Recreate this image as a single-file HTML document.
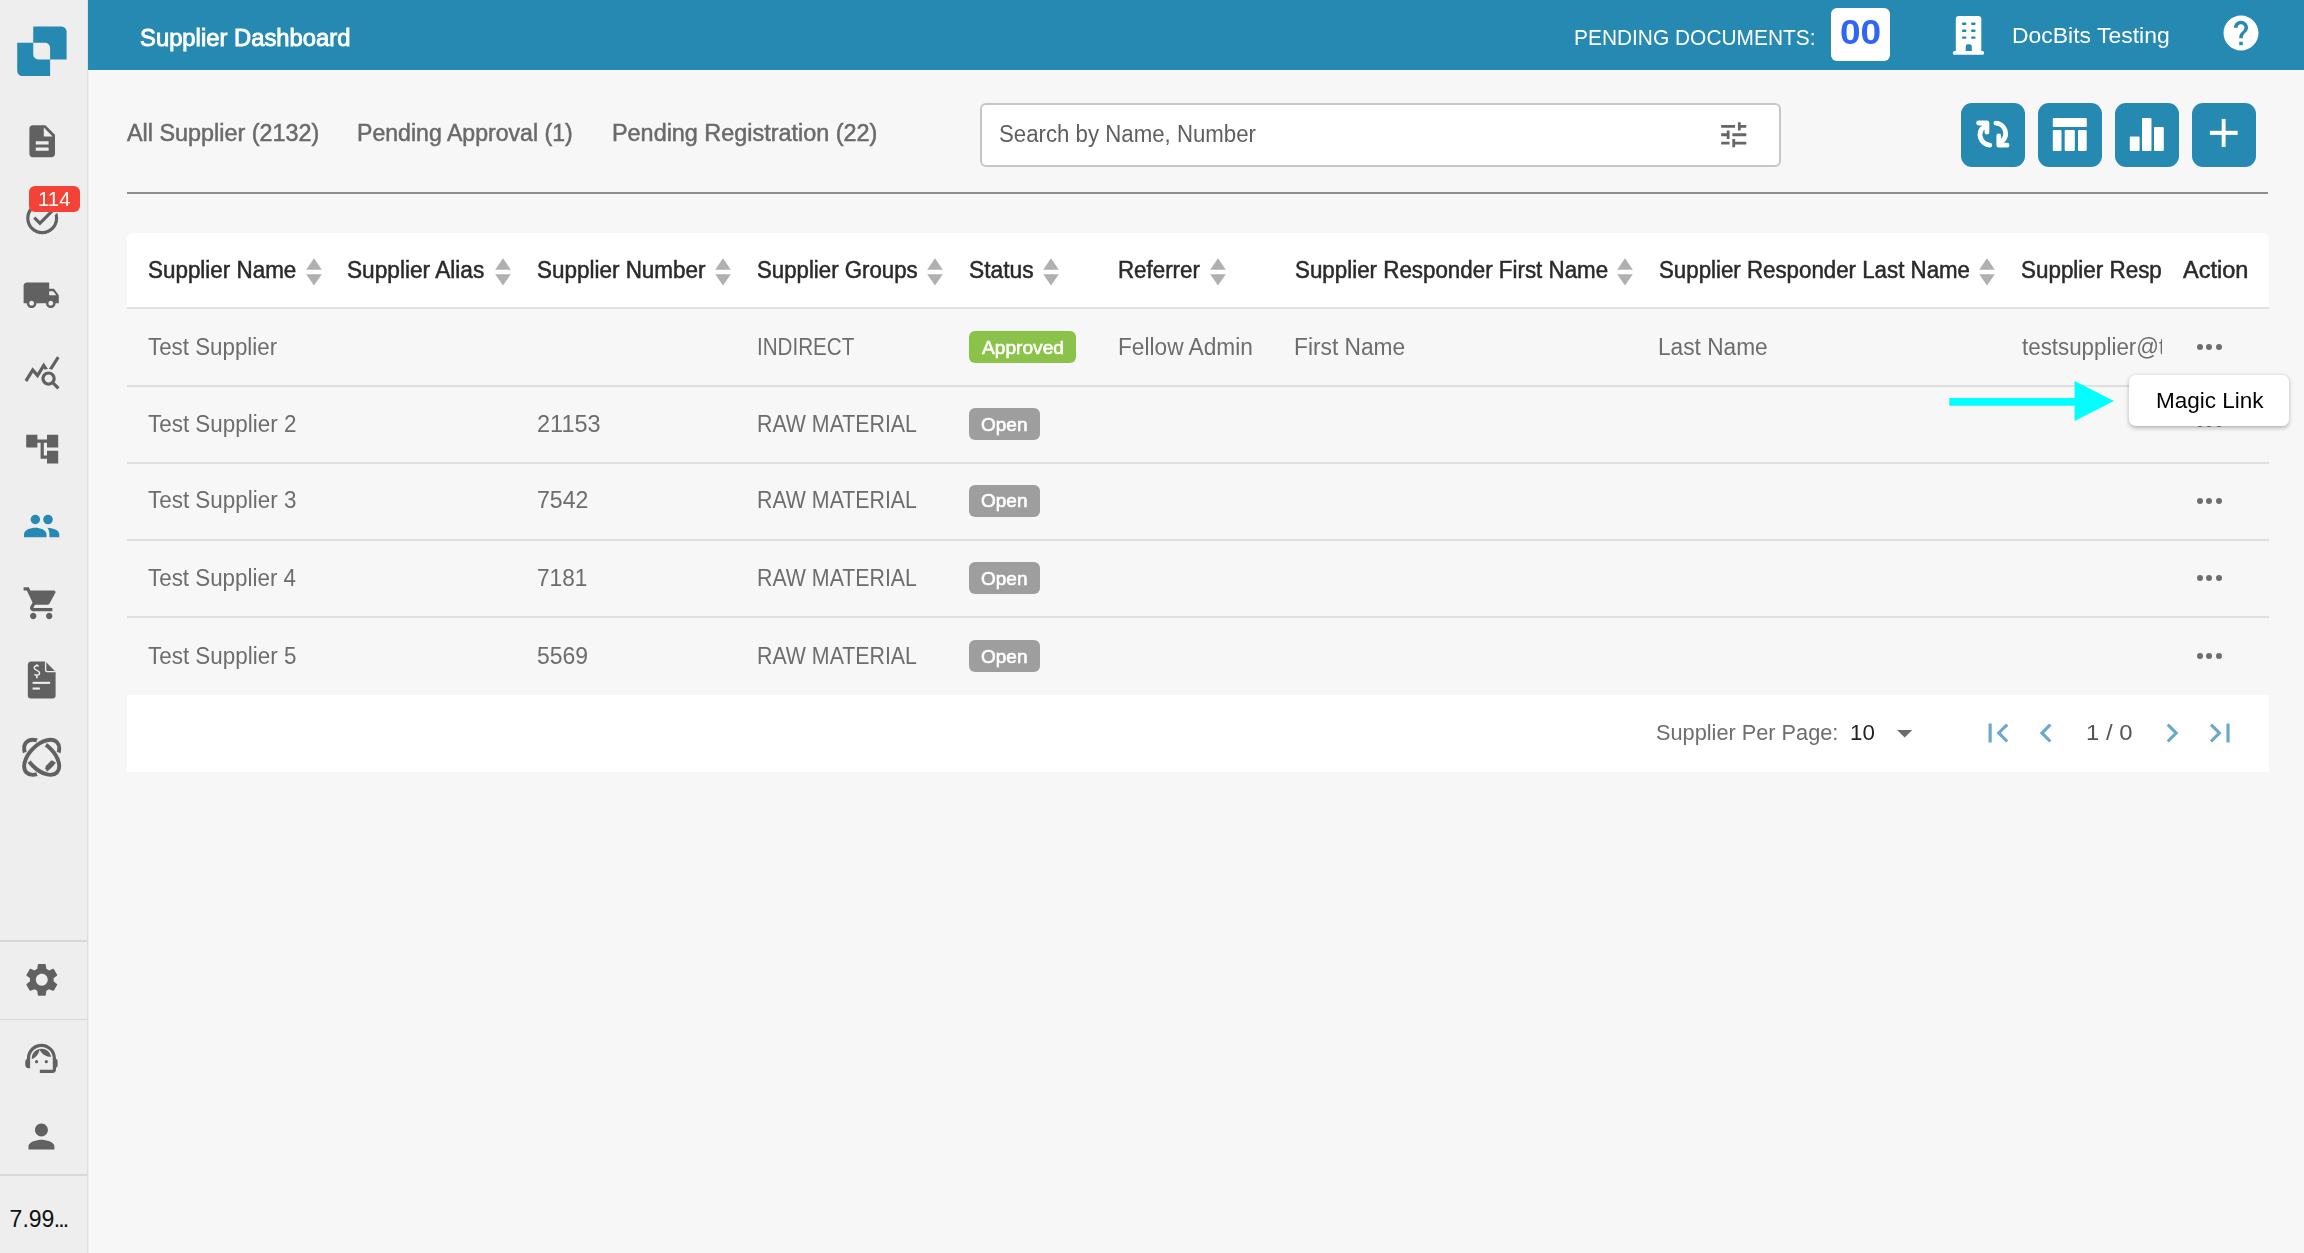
<!DOCTYPE html>
<html><head><meta charset="utf-8"><style>
html,body{margin:0;padding:0}
body{width:2304px;height:1253px;overflow:hidden;background:#f7f7f7;font-family:"Liberation Sans",sans-serif;position:relative}
.t{position:absolute;white-space:nowrap;transform-origin:0 0}
.ic{position:absolute;overflow:visible}
.abs{position:absolute}
</style></head><body>
<!-- sidebar -->
<div class="abs" style="left:0;top:0;width:87px;height:1253px;background:#eeeeee"></div>
<div class="abs" style="left:87px;top:0;width:1px;height:1253px;background:#dedede"></div><div class="abs" style="left:88px;top:0;width:1px;height:1253px;background:#f1f1f1"></div>
<div class="abs" style="left:0;top:940.3px;width:87px;height:1.6px;background:#d8d8d8"></div>
<div class="abs" style="left:0;top:1018.8px;width:87px;height:1.6px;background:#d8d8d8"></div>
<div class="abs" style="left:0;top:1174.3px;width:87px;height:1.6px;background:#d8d8d8"></div>
<svg class="ic" style="left:0;top:0;width:88px;height:90px" viewBox="0 0 88 90">
 <path fill="#2589b1" d="M33.25 26.4H61.4A5.2 5.2 0 0 1 66.6 31.6V59.6H33.25z"/>
 <path fill="#2589b1" d="M17.2 42.75H50.1V75.9H22.4A5.2 5.2 0 0 1 17.2 70.7z"/>
 <path fill="#eeeeee" d="M33.25 42.75H45A5.1 5.1 0 0 1 50.1 47.85V59.6H38.35A5.1 5.1 0 0 1 33.25 54.5z"/>
</svg>
<!-- header -->
<div class="abs" style="left:88px;top:0;width:2216px;height:70.4px;background:#2589b1"></div>
<div class="abs" style="left:1831px;top:8px;width:59px;height:52.5px;border-radius:6px;background:#ffffff"></div>
<svg class="ic" style="left:1950px;top:14px;width:38px;height:44px" viewBox="0 0 38 44">
 <path fill="#fff" d="M8.8 1.95H28.3A3 3 0 0 1 31.3 4.95V37H32.3A1.9 1.9 0 0 1 32.3 40.8H4.7A1.9 1.9 0 0 1 4.7 37H5.8V4.95A3 3 0 0 1 8.8 1.95z"/>
 <g fill="#2589b1"><rect x="11.9" y="8.6" width="4.6" height="2.4" rx="1.2"/><rect x="21" y="8.6" width="4.6" height="2.4" rx="1.2"/>
 <rect x="11.9" y="15.6" width="4.6" height="2.4" rx="1.2"/><rect x="21" y="15.6" width="4.6" height="2.4" rx="1.2"/>
 <rect x="11.9" y="22.4" width="4.6" height="2.4" rx="1.2"/><rect x="21" y="22.4" width="4.6" height="2.4" rx="1.2"/>
 <path d="M15.7 37V32.5A2.2 2.2 0 0 1 17.9 30.3H19.6A2.2 2.2 0 0 1 21.8 32.5V37z"/></g>
</svg>
<svg class="ic" style="left:2220.10px;top:11.50px;width:42.00px;height:42.00px" viewBox="0 0 24 24"><path fill="#ffffff" d="M12 2C6.48 2 2 6.48 2 12s4.48 10 10 10 10-4.48 10-10S17.52 2 12 2zm1 17h-2v-2h2v2zm2.07-7.75l-.9.92C13.45 12.9 13 13.5 13 15h-2v-.5c0-1.1.45-2.1 1.17-2.83l1.24-1.26c.37-.36.59-.86.59-1.41 0-1.1-.9-2-2-2s-2 .9-2 2H8c0-2.21 1.79-4 4-4s4 1.79 4 4c0 .88-.36 1.68-.93 2.25z"/></svg>
<!-- search -->
<div class="abs" style="box-sizing:border-box;left:980px;top:103px;width:801px;height:63.5px;border:2px solid #c6c6c6;border-radius:6px;background:#ffffff"></div>
<div class="abs" style="left:127px;top:192px;width:2141px;height:2px;background:#8e8e8e"></div>
<!-- buttons -->
<div class="abs" style="left:1961px;top:103px;width:64px;height:64px;border-radius:11px;background:#2589b1"></div>
<div class="abs" style="left:2038px;top:103px;width:64px;height:64px;border-radius:11px;background:#2589b1"></div>
<div class="abs" style="left:2115px;top:103px;width:64px;height:64px;border-radius:11px;background:#2589b1"></div>
<div class="abs" style="left:2192px;top:103px;width:64px;height:64px;border-radius:11px;background:#2589b1"></div>
<svg class="ic" style="left:1961px;top:103px;width:64px;height:64px" viewBox="1961 103 64 64">
 <g id="rfl" fill="none" stroke="#fff" stroke-width="4.8" stroke-linecap="round" stroke-linejoin="round">
  <path d="M1989.8 145.1A10.3 10.3 0 0 1 1984.2 126.6"/>
  <path d="M1978.6 123H1986.9V132.2"/>
 </g>
 <use href="#rfl" transform="rotate(180 1992.85 134.1)"/>
</svg>
<svg class="ic" style="left:2038px;top:103px;width:64px;height:64px" viewBox="0 0 64 64">
 <g fill="#fff"><rect x="14.8" y="15" width="34" height="9" rx="1"/><rect x="14.8" y="27" width="8.7" height="21" rx="1"/><rect x="26.7" y="27" width="10.1" height="21" rx="1"/><rect x="40" y="27" width="8.7" height="21" rx="1"/></g>
</svg>
<svg class="ic" style="left:2115px;top:103px;width:64px;height:64px" viewBox="0 0 64 64">
 <g fill="#fff"><rect x="14.8" y="33.6" width="9.8" height="14.3" rx="1"/><rect x="27" y="15" width="9.5" height="32.9" rx="1"/><rect x="39" y="24.1" width="9.8" height="23.8" rx="1"/></g>
</svg>
<svg class="ic" style="left:2192px;top:103px;width:64px;height:64px" viewBox="0 0 64 64">
 <g fill="#fff"><rect x="17.9" y="27.8" width="27.8" height="4.1"/><rect x="29.7" y="15.9" width="3.9" height="28"/></g>
</svg>
<!-- table -->
<div class="abs" style="left:127px;top:233px;width:2141.5px;height:75px;background:#ffffff;border-radius:6px 6px 0 0"></div>
<div class="abs" style="left:127px;top:307.4px;width:2141.5px;height:2px;background:#e0e0e0"></div>
<div class="abs" style="left:127px;top:384.8px;width:2141.5px;height:2px;background:#dfdfdf"></div>
<div class="abs" style="left:127px;top:462.1px;width:2141.5px;height:2px;background:#dfdfdf"></div>
<div class="abs" style="left:127px;top:538.9px;width:2141.5px;height:2px;background:#dfdfdf"></div>
<div class="abs" style="left:127px;top:615.9px;width:2141.5px;height:2px;background:#dfdfdf"></div>
<div class="abs" style="left:127px;top:694.6px;width:2141.5px;height:77px;background:#ffffff"></div>
<!-- badges -->
<div class="abs" style="left:969.2px;top:331.2px;width:107.2px;height:31.9px;border-radius:6px;background:#8bc34a"></div>
<div class="abs" style="left:969.3px;top:408.2px;width:70.5px;height:31.6px;border-radius:6px;background:#9e9e9e"></div>
<div class="abs" style="left:969.3px;top:485.2px;width:70.5px;height:31.6px;border-radius:6px;background:#9e9e9e"></div>
<div class="abs" style="left:969.3px;top:562.4px;width:70.5px;height:31.6px;border-radius:6px;background:#9e9e9e"></div>
<div class="abs" style="left:969.3px;top:640px;width:70.5px;height:31.6px;border-radius:6px;background:#9e9e9e"></div>
<!-- email clipped -->
<div class="abs" style="left:2010px;top:320px;width:151.5px;height:50px;overflow:hidden"><div class="t" style="left:12.10px;top:15.75px;font-size:23px;line-height:23px;color:#6d6d6d;transform:scaleX(0.9714)">testsupplier@test.com</div></div>
<div class="abs" style="left:2010px;top:245px;width:152px;height:50px;overflow:hidden"><div class="t" style="left:11.10px;top:13.75px;font-size:23px;line-height:23px;color:#2a2a2a;transform:scaleX(0.9749);-webkit-text-stroke:0.5px #2a2a2a">Supplier Responder Email</div></div>
<div class="abs" style="left:2196.85px;top:344.30px;width:6px;height:6px;border-radius:50%;background:#6e6e6e"></div><div class="abs" style="left:2206.40px;top:344.30px;width:6px;height:6px;border-radius:50%;background:#6e6e6e"></div><div class="abs" style="left:2216.00px;top:344.30px;width:6px;height:6px;border-radius:50%;background:#6e6e6e"></div><div class="abs" style="left:2196.85px;top:421.20px;width:6px;height:6px;border-radius:50%;background:#6e6e6e"></div><div class="abs" style="left:2206.40px;top:421.20px;width:6px;height:6px;border-radius:50%;background:#6e6e6e"></div><div class="abs" style="left:2216.00px;top:421.20px;width:6px;height:6px;border-radius:50%;background:#6e6e6e"></div><div class="abs" style="left:2196.85px;top:498.20px;width:6px;height:6px;border-radius:50%;background:#6e6e6e"></div><div class="abs" style="left:2206.40px;top:498.20px;width:6px;height:6px;border-radius:50%;background:#6e6e6e"></div><div class="abs" style="left:2216.00px;top:498.20px;width:6px;height:6px;border-radius:50%;background:#6e6e6e"></div><div class="abs" style="left:2196.85px;top:575.30px;width:6px;height:6px;border-radius:50%;background:#6e6e6e"></div><div class="abs" style="left:2206.40px;top:575.30px;width:6px;height:6px;border-radius:50%;background:#6e6e6e"></div><div class="abs" style="left:2216.00px;top:575.30px;width:6px;height:6px;border-radius:50%;background:#6e6e6e"></div><div class="abs" style="left:2196.85px;top:652.60px;width:6px;height:6px;border-radius:50%;background:#6e6e6e"></div><div class="abs" style="left:2206.40px;top:652.60px;width:6px;height:6px;border-radius:50%;background:#6e6e6e"></div><div class="abs" style="left:2216.00px;top:652.60px;width:6px;height:6px;border-radius:50%;background:#6e6e6e"></div>
<svg class="ic" style="left:305.60px;top:258px;width:16px;height:28px" viewBox="0 0 16 28"><path fill="#b0b0b0" d="M8 0.2L15.8 11.7H0.2z M0.2 16.2H15.8L8 27.4z"/></svg><svg class="ic" style="left:494.60px;top:258px;width:16px;height:28px" viewBox="0 0 16 28"><path fill="#b0b0b0" d="M8 0.2L15.8 11.7H0.2z M0.2 16.2H15.8L8 27.4z"/></svg><svg class="ic" style="left:715.30px;top:258px;width:16px;height:28px" viewBox="0 0 16 28"><path fill="#b0b0b0" d="M8 0.2L15.8 11.7H0.2z M0.2 16.2H15.8L8 27.4z"/></svg><svg class="ic" style="left:926.60px;top:258px;width:16px;height:28px" viewBox="0 0 16 28"><path fill="#b0b0b0" d="M8 0.2L15.8 11.7H0.2z M0.2 16.2H15.8L8 27.4z"/></svg><svg class="ic" style="left:1043.40px;top:258px;width:16px;height:28px" viewBox="0 0 16 28"><path fill="#b0b0b0" d="M8 0.2L15.8 11.7H0.2z M0.2 16.2H15.8L8 27.4z"/></svg><svg class="ic" style="left:1209.50px;top:258px;width:16px;height:28px" viewBox="0 0 16 28"><path fill="#b0b0b0" d="M8 0.2L15.8 11.7H0.2z M0.2 16.2H15.8L8 27.4z"/></svg><svg class="ic" style="left:1616.60px;top:258px;width:16px;height:28px" viewBox="0 0 16 28"><path fill="#b0b0b0" d="M8 0.2L15.8 11.7H0.2z M0.2 16.2H15.8L8 27.4z"/></svg><svg class="ic" style="left:1979.10px;top:258px;width:16px;height:28px" viewBox="0 0 16 28"><path fill="#b0b0b0" d="M8 0.2L15.8 11.7H0.2z M0.2 16.2H15.8L8 27.4z"/></svg>
<svg class="ic" style="left:22.60px;top:121.80px;width:38.40px;height:38.40px" viewBox="0 0 24 24"><path fill="#616161" d="M14 2H6c-1.1 0-1.99.9-1.99 2L4 20c0 1.1.89 2 1.99 2H18c1.1 0 2-.9 2-2V8l-6-6zm2 16H8v-2h8v2zm0-4H8v-2h8v2zm-3-5V3.5L18.5 9H13z"/></svg>
<svg class="ic" style="left:22.70px;top:198.80px;width:38.40px;height:38.40px" viewBox="0 0 24 24"><path fill="#616161" d="M22,5.18L10.59,16.6l-4.24-4.24l1.41-1.41l2.83,2.83l10-10L22,5.18z M19.79,10.22C19.92,10.79,20,11.39,20,12c0,4.42-3.58,8-8,8s-8-3.58-8-8c0-4.42,3.58-8,8-8c1.58,0,3.04,0.46,4.28,1.25l1.44-1.44C16.1,2.67,14.13,2,12,2C6.48,2,2,6.48,2,12c0,5.52,4.48,10,10,10s10-4.48,10-10c0-1.19-0.22-2.33-0.6-3.39L19.79,10.22z"/></svg>
<svg class="ic" style="left:22.40px;top:275.80px;width:38.40px;height:38.40px" viewBox="0 0 24 24"><path fill="#616161" d="M20 8h-3V4H3c-1.1 0-2 .9-2 2v11h2c0 1.66 1.34 3 3 3s3-1.34 3-3h6c0 1.66 1.34 3 3 3s3-1.34 3-3h2v-5l-3-4zM6 18.5c-.83 0-1.5-.67-1.5-1.5s.67-1.5 1.5-1.5 1.5.67 1.5 1.5-.67 1.5-1.5 1.5zm13.5-9l1.96 2.5H17V9.5h2.5zm-1.5 9c-.83 0-1.5-.67-1.5-1.5s.67-1.5 1.5-1.5 1.5.67 1.5 1.5-.67 1.5-1.5 1.5z"/></svg>
<svg class="ic" style="left:22.70px;top:352.80px;width:38.16px;height:38.16px" viewBox="0 0 24 24"><path fill="#616161" d="M19.88 18.47c.44-.7.7-1.51.7-2.39 0-2.49-2.01-4.5-4.5-4.5s-4.5 2.01-4.5 4.5 2.01 4.5 4.49 4.5c.88 0 1.7-.26 2.39-.7L21.58 23 23 21.58l-3.12-3.11zm-3.8.11c-1.38 0-2.5-1.12-2.5-2.5s1.12-2.5 2.5-2.5 2.5 1.12 2.5 2.5-1.12 2.5-2.5 2.5zm-.36-8.5c-.74.02-1.45.18-2.1.45l-.55-.83-3.8 6.18-3.01-3.52-3.63 5.81L1 17l5-8 3 3.5L13 6l2.72 4.08zm2.59.5c-.64-.28-1.33-.45-2.05-.49L21.38 2 23 3.18l-4.69 7.4z"/></svg>
<svg class="ic" style="left:22.60px;top:430.00px;width:38.40px;height:38.40px" viewBox="0 0 24 24"><path fill="#616161" d="M22 11V3h-7v3H9V3H2v8h7V8h2v10h4v3h7v-8h-7v3h-2V8h2v3z"/></svg>
<svg class="ic" style="left:22.40px;top:584.00px;width:38.40px;height:38.40px" viewBox="0 0 24 24"><path fill="#616161" d="M7 18c-1.1 0-1.99.9-1.99 2S5.9 22 7 22s2-.9 2-2-.9-2-2-2zM1 2v2h2l3.6 7.59-1.35 2.45c-.16.28-.25.61-.25.96 0 1.1.9 2 2 2h12v-2H7.42c-.14 0-.25-.11-.25-.25l.03-.12.9-1.63h7.45c.75 0 1.41-.41 1.75-1.03l3.58-6.49c.08-.14.12-.31.12-.48 0-.55-.45-1-1-1H5.21l-.94-2H1zm16 16c-1.1 0-1.99.9-1.99 2s.89 2 1.99 2 2-.9 2-2-.9-2-2-2z"/></svg>
<svg class="ic" style="left:21.70px;top:960.20px;width:39.60px;height:39.60px" viewBox="0 0 24 24"><path fill="#616161" d="M19.14 12.94c.04-.3.06-.61.06-.94 0-.32-.02-.64-.07-.94l2.03-1.58c.18-.14.23-.41.12-.61l-1.92-3.32c-.12-.22-.37-.29-.59-.22l-2.39.96c-.5-.38-1.03-.7-1.62-.94l-.36-2.54c-.04-.24-.24-.41-.48-.41h-3.84c-.24 0-.43.17-.47.41l-.36 2.54c-.59.24-1.13.57-1.62.94l-2.39-.96c-.22-.08-.47 0-.59.22L2.74 8.87c-.12.21-.08.47.12.61l2.03 1.58c-.05.3-.09.63-.09.94s.02.64.07.94l-2.03 1.58c-.18.14-.23.41-.12.61l1.92 3.32c.12.22.37.29.59.22l2.39-.96c.5.38 1.03.7 1.62.94l.36 2.54c.05.24.24.41.48.41h3.84c.24 0 .44-.17.47-.41l.36-2.54c.59-.24 1.13-.56 1.62-.94l2.39.96c.22.08.47 0 .59-.22l1.92-3.32c.12-.22.07-.47-.12-.61l-2.01-1.58zM12 15.6c-1.98 0-3.6-1.62-3.6-3.6s1.62-3.6 3.6-3.6 3.6 1.62 3.6 3.6-1.62 3.6-3.6 3.6z"/></svg>
<svg class="ic" style="left:22.40px;top:1039.20px;width:38.88px;height:38.88px" viewBox="0 0 24 24"><path fill="#616161" d="M21 12.22C21 6.73 16.74 3 12 3c-4.69 0-9 3.65-9 9.28-.6.34-1 .98-1 1.72v2c0 1.1.9 2 2 2h1v-6.1c0-3.87 3.13-7 7-7s7 3.13 7 7V19h-8v2h8c1.1 0 2-.9 2-2v-1.22c.59-.31 1-.92 1-1.64v-2.3c0-.7-.41-1.31-1-1.62zM8 14a1 1 0 1 0 2 0a1 1 0 1 0-2 0zM14 14a1 1 0 1 0 2 0a1 1 0 1 0-2 0zM18 11.03C17.52 8.18 15.04 6 12.05 6c-3.03 0-6.29 2.51-6.03 6.45 2.47-1.01 4.33-3.21 4.86-5.89 1.31 2.63 4 4.44 7.12 4.47z"/></svg>
<svg class="ic" style="left:22.30px;top:1116.50px;width:38.88px;height:38.88px" viewBox="0 0 24 24"><path fill="#616161" d="M12 12c2.21 0 4-1.79 4-4s-1.79-4-4-4-4 1.79-4 4 1.79 4 4 4zm0 2c-2.67 0-8 1.34-8 4v2h16v-2c0-2.66-5.33-4-8-4z"/></svg>
<svg class="ic" style="left:1717.22px;top:117.82px;width:33.47px;height:33.47px" viewBox="0 0 24 24"><path fill="#666666" d="M3 17v2h6v-2H3zM3 5v2h10V5H3zm10 16v-2h8v-2h-8v-2h-2v6h2zM7 9v2H3v2h4v2h2V9H7zm14 4v-2H11v2h10zm-6-4h2V7h4V5h-4V3h-2v6z"/></svg>
<svg class="ic" style="left:1978.70px;top:714.20px;width:38.16px;height:38.16px" viewBox="0 0 24 24"><path fill="#6aaac8" d="M18.41 16.59L13.82 12l4.59-4.59L17 6l-6 6 6 6zM6 6h2v12H6z"/></svg>
<svg class="ic" style="left:2027.20px;top:714.20px;width:38.16px;height:38.16px" viewBox="0 0 24 24"><path fill="#6aaac8" d="M15.41 7.41L14 6l-6 6 6 6 1.41-1.41L10.83 12z"/></svg>
<svg class="ic" style="left:2153.20px;top:714.20px;width:38.16px;height:38.16px" viewBox="0 0 24 24"><path fill="#6aaac8" d="M10 6L8.59 7.41 13.17 12l-4.58 4.59L10 18l6-6z"/></svg>
<svg class="ic" style="left:2201.10px;top:714.20px;width:38.16px;height:38.16px" viewBox="0 0 24 24"><path fill="#6aaac8" d="M5.59 7.41L10.18 12l-4.59 4.59L7 18l6-6-6-6zM16 6h2v12h-2z"/></svg>
<div class="abs" style="left:29px;top:186px;width:51px;height:26px;border-radius:6px;background:#f44336"></div>
<div class="t" style="left:140.26px;top:25.65px;font-size:24.2px;line-height:24.2px;color:#ffffff;font-weight:normal;transform:scaleX(0.9845);-webkit-text-stroke:0.9px #fff;">Supplier Dashboard</div>
<div class="t" style="left:1574.37px;top:26.50px;font-size:22.5px;line-height:22.5px;color:#ffffff;font-weight:normal;transform:scaleX(0.9289);">PENDING DOCUMENTS:</div>
<div class="t" style="left:1839.84px;top:14.25px;font-size:35px;line-height:35px;color:#2f66f5;font-weight:bold;transform:scaleX(1.0572);">00</div>
<div class="t" style="left:2012.21px;top:24.50px;font-size:22.5px;line-height:22.5px;color:#ffffff;font-weight:normal;transform:scaleX(1.0195);">DocBits Testing</div>
<div class="t" style="left:127.40px;top:121.75px;font-size:23px;line-height:23px;color:#6a6a6a;font-weight:normal;transform:scaleX(1.0158);-webkit-text-stroke:0.5px #6a6a6a;">All Supplier (2132)</div>
<div class="t" style="left:356.90px;top:121.75px;font-size:23px;line-height:23px;color:#6a6a6a;font-weight:normal;transform:scaleX(1.0043);-webkit-text-stroke:0.5px #6a6a6a;">Pending Approval (1)</div>
<div class="t" style="left:611.87px;top:121.75px;font-size:23px;line-height:23px;color:#6a6a6a;font-weight:normal;transform:scaleX(1.0173);-webkit-text-stroke:0.5px #6a6a6a;">Pending Registration (22)</div>
<div class="t" style="left:999.11px;top:122.75px;font-size:23px;line-height:23px;color:#5f5f5f;font-weight:normal;transform:scaleX(0.9666);">Search by Name, Number</div>
<div class="t" style="left:147.60px;top:258.75px;font-size:23px;line-height:23px;color:#2a2a2a;font-weight:normal;transform:scaleX(0.9749);-webkit-text-stroke:0.5px #2a2a2a;">Supplier Name</div>
<div class="t" style="left:346.79px;top:258.75px;font-size:23px;line-height:23px;color:#2a2a2a;font-weight:normal;transform:scaleX(0.9850);-webkit-text-stroke:0.5px #2a2a2a;">Supplier Alias</div>
<div class="t" style="left:536.80px;top:258.75px;font-size:23px;line-height:23px;color:#2a2a2a;font-weight:normal;transform:scaleX(0.9764);-webkit-text-stroke:0.5px #2a2a2a;">Supplier Number</div>
<div class="t" style="left:757.01px;top:258.75px;font-size:23px;line-height:23px;color:#2a2a2a;font-weight:normal;transform:scaleX(0.9668);-webkit-text-stroke:0.5px #2a2a2a;">Supplier Groups</div>
<div class="t" style="left:968.99px;top:258.75px;font-size:23px;line-height:23px;color:#2a2a2a;font-weight:normal;transform:scaleX(0.9911);-webkit-text-stroke:0.5px #2a2a2a;">Status</div>
<div class="t" style="left:1117.76px;top:258.75px;font-size:23px;line-height:23px;color:#2a2a2a;font-weight:normal;transform:scaleX(0.9704);-webkit-text-stroke:0.5px #2a2a2a;">Referrer</div>
<div class="t" style="left:1295.10px;top:258.75px;font-size:23px;line-height:23px;color:#2a2a2a;font-weight:normal;transform:scaleX(0.9720);-webkit-text-stroke:0.5px #2a2a2a;">Supplier Responder First Name</div>
<div class="t" style="left:1659.20px;top:258.75px;font-size:23px;line-height:23px;color:#2a2a2a;font-weight:normal;transform:scaleX(0.9692);-webkit-text-stroke:0.5px #2a2a2a;">Supplier Responder Last Name</div>
<div class="t" style="left:2183.10px;top:258.75px;font-size:23px;line-height:23px;color:#2a2a2a;font-weight:normal;transform:scaleX(1.0234);-webkit-text-stroke:0.5px #2a2a2a;">Action</div>
<div class="t" style="left:147.85px;top:335.75px;font-size:23px;line-height:23px;color:#6d6d6d;font-weight:normal;transform:scaleX(0.9714);">Test Supplier</div>
<div class="t" style="left:756.79px;top:335.75px;font-size:23px;line-height:23px;color:#6d6d6d;font-weight:normal;transform:scaleX(0.8960);">INDIRECT</div>
<div class="t" style="left:1117.98px;top:335.75px;font-size:23px;line-height:23px;color:#6d6d6d;font-weight:normal;transform:scaleX(0.9859);">Fellow Admin</div>
<div class="t" style="left:1294.22px;top:335.75px;font-size:23px;line-height:23px;color:#6d6d6d;font-weight:normal;transform:scaleX(0.9889);">First Name</div>
<div class="t" style="left:1658.23px;top:335.75px;font-size:23px;line-height:23px;color:#6d6d6d;font-weight:normal;transform:scaleX(0.9863);">Last Name</div>
<div class="t" style="left:147.85px;top:412.75px;font-size:23px;line-height:23px;color:#6d6d6d;font-weight:normal;transform:scaleX(0.9752);">Test Supplier 2</div>
<div class="t" style="left:536.50px;top:412.75px;font-size:23px;line-height:23px;color:#6d6d6d;font-weight:normal;transform:scaleX(1.0226);">21153</div>
<div class="t" style="left:756.63px;top:412.75px;font-size:23px;line-height:23px;color:#6d6d6d;font-weight:normal;transform:scaleX(0.9269);">RAW MATERIAL</div>
<div class="t" style="left:147.85px;top:488.75px;font-size:23px;line-height:23px;color:#6d6d6d;font-weight:normal;transform:scaleX(0.9752);">Test Supplier 3</div>
<div class="t" style="left:536.52px;top:488.75px;font-size:23px;line-height:23px;color:#6d6d6d;font-weight:normal;transform:scaleX(1.0050);">7542</div>
<div class="t" style="left:756.63px;top:488.75px;font-size:23px;line-height:23px;color:#6d6d6d;font-weight:normal;transform:scaleX(0.9269);">RAW MATERIAL</div>
<div class="t" style="left:147.85px;top:566.75px;font-size:23px;line-height:23px;color:#6d6d6d;font-weight:normal;transform:scaleX(0.9728);">Test Supplier 4</div>
<div class="t" style="left:536.54px;top:566.75px;font-size:23px;line-height:23px;color:#6d6d6d;font-weight:normal;transform:scaleX(0.9846);">7181</div>
<div class="t" style="left:756.63px;top:566.75px;font-size:23px;line-height:23px;color:#6d6d6d;font-weight:normal;transform:scaleX(0.9269);">RAW MATERIAL</div>
<div class="t" style="left:147.85px;top:644.75px;font-size:23px;line-height:23px;color:#6d6d6d;font-weight:normal;transform:scaleX(0.9752);">Test Supplier 5</div>
<div class="t" style="left:536.88px;top:644.75px;font-size:23px;line-height:23px;color:#6d6d6d;font-weight:normal;transform:scaleX(0.9977);">5569</div>
<div class="t" style="left:756.63px;top:644.75px;font-size:23px;line-height:23px;color:#6d6d6d;font-weight:normal;transform:scaleX(0.9269);">RAW MATERIAL</div>
<div class="t" style="left:982.20px;top:338.25px;font-size:19px;line-height:19px;color:#ffffff;font-weight:normal;transform:scaleX(1.0079);-webkit-text-stroke:0.6px #fff;">Approved</div>
<div class="t" style="left:981.31px;top:415.25px;font-size:19px;line-height:19px;color:#ffffff;font-weight:normal;transform:scaleX(0.9995);-webkit-text-stroke:0.6px #fff;">Open</div>
<div class="t" style="left:981.31px;top:491.25px;font-size:19px;line-height:19px;color:#ffffff;font-weight:normal;transform:scaleX(0.9995);-webkit-text-stroke:0.6px #fff;">Open</div>
<div class="t" style="left:981.31px;top:569.25px;font-size:19px;line-height:19px;color:#ffffff;font-weight:normal;transform:scaleX(0.9995);-webkit-text-stroke:0.6px #fff;">Open</div>
<div class="t" style="left:981.31px;top:647.25px;font-size:19px;line-height:19px;color:#ffffff;font-weight:normal;transform:scaleX(0.9995);-webkit-text-stroke:0.6px #fff;">Open</div>
<div class="t" style="left:1655.72px;top:721.75px;font-size:22px;line-height:22px;color:#6d6d6d;font-weight:normal;transform:scaleX(0.9874);">Supplier Per Page:</div>
<div class="t" style="left:1850.40px;top:721.75px;font-size:22px;line-height:22px;color:#222222;font-weight:normal;transform:scaleX(1.0156);">10</div>
<div class="t" style="left:2085.81px;top:721.75px;font-size:22px;line-height:22px;color:#555555;font-weight:normal;transform:scaleX(1.0835);">1 / 0</div>
<div class="t" style="left:38.03px;top:189.25px;font-size:20px;line-height:20px;color:#ffffff;font-weight:normal;transform:scaleX(1.0187);">114</div>
<!-- caret -->
<svg class="ic" style="left:1897.2px;top:729.9px;width:15.3px;height:7.6px" viewBox="0 0 15.3 7.6"><path fill="#6d6d6d" d="M0 0H15.3L7.65 7.6z"/></svg>
<!-- tooltip -->
<div class="abs" style="left:2128.9px;top:375px;width:160.4px;height:51.1px;border-radius:6.5px;background:#ffffff;box-shadow:0 1.5px 4px rgba(0,0,0,0.28)"></div>
<div class="t" style="left:2155.54px;top:389.50px;font-size:22.5px;line-height:22.5px;color:#000000;font-weight:normal;transform:scaleX(1.0006);">Magic Link</div>
<!-- arrow -->
<svg class="ic" style="left:1940px;top:370px;width:190px;height:60px" viewBox="1940 370 190 60"><path fill="#00ffff" d="M1949.3 398H2074.6V381.1L2114 401.1L2074.6 421V405.8H1949.3z"/></svg>
<svg class="ic" style="left:20px;top:508px;width:44px;height:34px" viewBox="0 0 44 34">
 <g fill="#2589b1"><circle cx="15.35" cy="11.55" r="4.7"/><circle cx="28" cy="11.55" r="4.8"/>
 <path d="M4 29.2V26.5C4 21.8 10.5 19.8 15.3 19.8S26.5 21.8 26.5 26.5V29.2z"/>
 <path d="M27.3 19.8C32.5 20 39.3 21.8 39.3 26.5V29.2H29.4V26.5C29.4 23.6 28.7 21.5 27.3 19.8z"/></g>
</svg>
<div class="t" style="left:9.6px;top:1207.5px;font-size:23px;line-height:23px;color:#111111;letter-spacing:0px">7.99<span style="letter-spacing:-1.9px;margin-left:-0.6px">...</span></div>
<svg class="ic" style="left:20px;top:655px;width:44px;height:50px" viewBox="0 0 44 50">
 <path fill="#616161" d="M11.3 6.6H25.5L35.6 16.7V40.6A3 3 0 0 1 32.6 43.6H10.8A3 3 0 0 1 7.8 40.6V10.1A3.5 3.5 0 0 1 11.3 6.6z"/>
 <path fill="#eeeeee" d="M24.9 6.6V15.1A2.2 2.2 0 0 0 27.1 17.3H35.6V15.9H27.1A0.8 0.8 0 0 1 26.3 15.1V6.6z"/>
 <path fill="none" stroke="#eeeeee" stroke-width="1.5" d="M18.8 11.2C17.5 10.3 14.2 10.5 14.2 12.8C14.2 16 19.6 14.7 19.6 18C19.6 20.5 16 20.6 14.4 19.4M16.9 9.2V11M16.9 20.4V23.2"/>
 <rect x="12.6" y="26.8" width="17.5" height="2.1" fill="#eeeeee"/><rect x="12.6" y="32.5" width="7.3" height="2.1" fill="#eeeeee"/>
</svg>
<svg class="ic" style="left:10px;top:725px;width:64px;height:64px" viewBox="10 725 64 64">
 <defs>
  <mask id="mB" maskUnits="userSpaceOnUse" x="10" y="725" width="64" height="64"><rect x="10" y="725" width="64" height="64" fill="#fff"/><circle cx="41.7" cy="742.1" r="5.2" fill="#000"/><circle cx="26.5" cy="757.3" r="5.2" fill="#000"/></mask>
  <mask id="mA" maskUnits="userSpaceOnUse" x="10" y="725" width="64" height="64"><rect x="10" y="725" width="64" height="64" fill="#fff"/><circle cx="56.9" cy="757.3" r="5.2" fill="#000"/><circle cx="41.7" cy="772.5" r="5.2" fill="#000"/></mask>
 </defs>
 <g fill="none" stroke="#616161" stroke-width="3.9">
  <g mask="url(#mA)"><ellipse cx="41.7" cy="757.3" rx="21.5" ry="12.3" transform="rotate(-45 41.7 757.3)"/></g>
  <g mask="url(#mB)"><ellipse cx="41.7" cy="757.3" rx="21.5" ry="12.3" transform="rotate(45 41.7 757.3)"/></g>
 </g>
 <path fill="#616161" d="M45.3 766.5L51.5 760.3A4.39 4.39 0 0 1 45.3 766.5z"/>
</svg>
</body></html>
